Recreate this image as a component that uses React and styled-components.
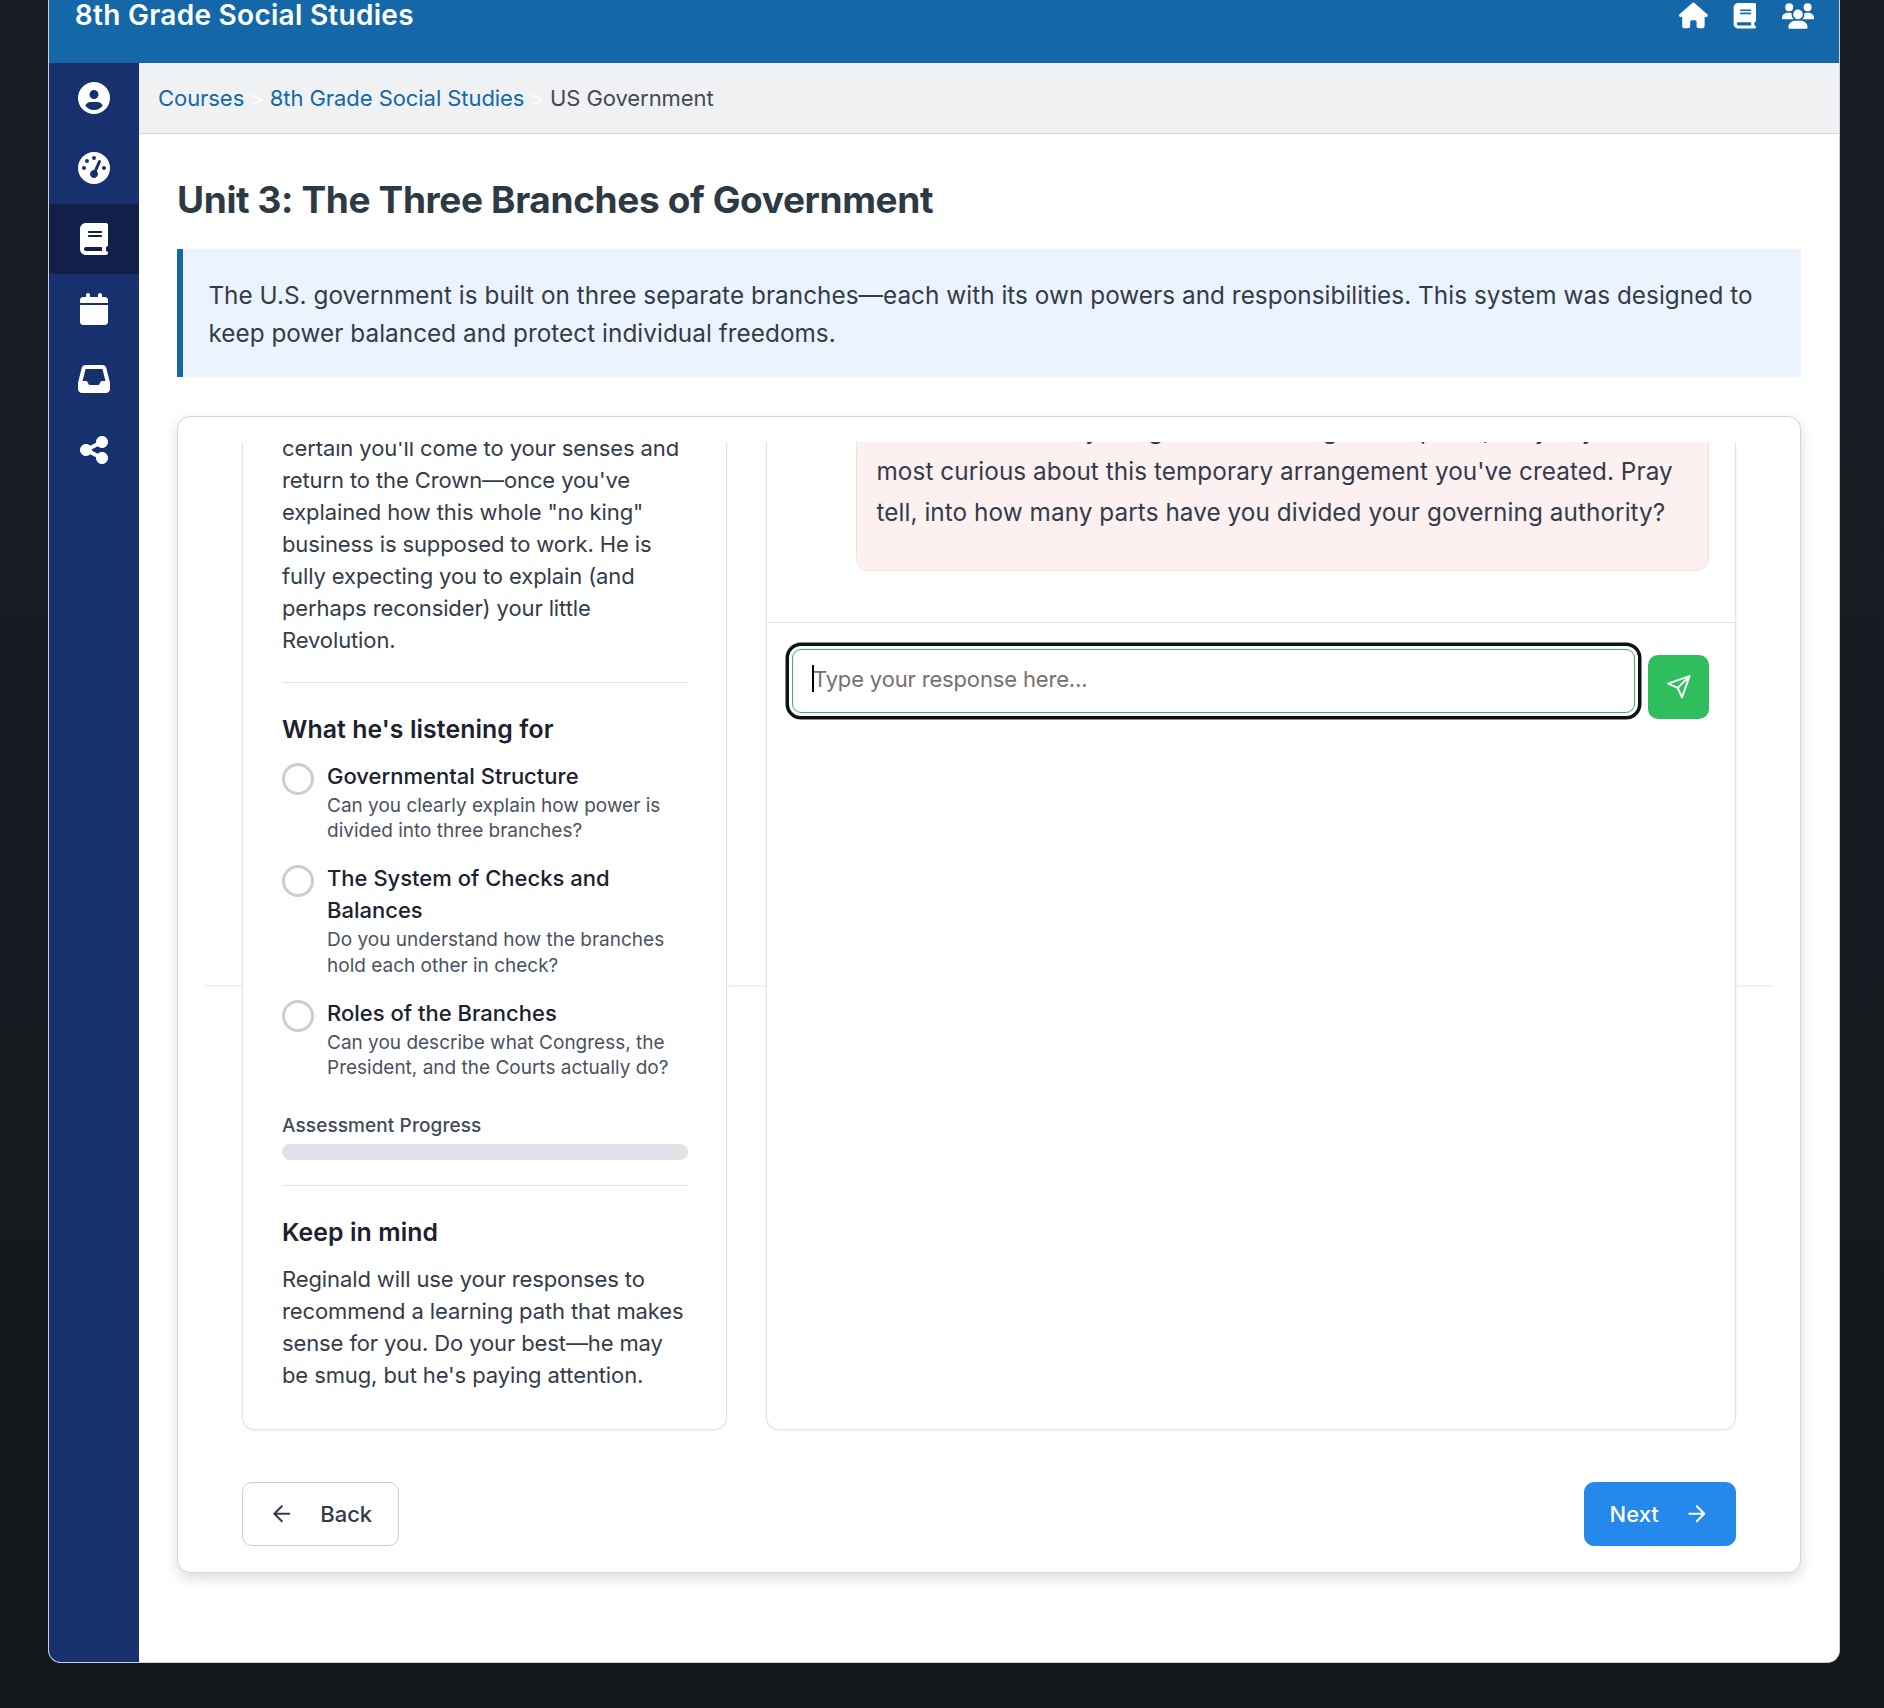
import React from "react";
import styled, { createGlobalStyle, css } from "styled-components";
import {
  FaGaugeHigh,
  FaCalendar,
  FaBook,
  FaInbox,
  FaShareNodes,
  FaHouse,
  FaUsers,
} from "react-icons/fa6";

const GlobalStyle = createGlobalStyle`
  *, *::before, *::after { box-sizing: border-box; }
  body {
    margin: 0;
    background: #15191d;
    font-family: Inter, "Noto Sans", sans-serif;
    color: #343b49;
  }
  p, h1, h2, h3 { margin: 0; }
`;

const Page = styled.div`
  height: 1708px;
  padding-left: 48px;
  overflow: hidden;
  background: linear-gradient(#191c25, #14181b);
`;

const Window = styled.div`
  display: flex;
  flex-direction: column;
  width: 1792px;
  height: 1663px;
  border: 1px solid #cdd1d6;
  border-top: none;
  border-radius: 0 0 13px 13px;
  overflow: hidden;
  background: #fff;
`;

const Header = styled.header`
  display: flex;
  justify-content: space-between;
  flex: none;
  height: 63px;
  padding: 0 25.3px 0 25.8px;
  background: #1468a8;
  color: #fff;
`;

const CourseName = styled.h2`
  font-size: 28px;
  line-height: 30px;
  font-weight: 600;
  letter-spacing: 0.275px;
`;

const HeaderNav = styled.nav`
  display: flex;
  align-items: center;
  gap: 24px;
  height: 31.6px;
`;

const NavGlyph = styled.span`
  display: flex;
  font-size: ${(p) => p.$size}px;
`;

const Body = styled.div`
  display: flex;
  flex: 1;
  min-height: 0;
`;

const Sidebar = styled.aside`
  flex: none;
  width: 90px;
  background: #17316f;
`;

const SidebarItem = styled.a`
  display: flex;
  align-items: center;
  justify-content: center;
  height: 70.3px;
  font-size: 32px;
  color: #fff;
  background: ${(p) => (p.$active ? "#121f48" : "transparent")};
`;

const Content = styled.div`
  flex: 1;
  min-width: 0;
  background: #fff;
`;

const Breadcrumb = styled.nav`
  display: flex;
  align-items: center;
  gap: 5.5px;
  height: 71px;
  padding-left: 19px;
  background: #f0f1f3;
  border-bottom: 1px solid #d6d7da;
  font-size: 22px;
  line-height: 28px;
  letter-spacing: -0.06px;
`;

const Crumb = styled.span`
  color: ${(p) => (p.$link ? "#1468a8" : "#424955")};
`;

const CrumbSeparator = styled.span`
  color: #fcfcfd;
`;

const Main = styled.main`
  padding: 43px 38px 0;
`;

const UnitTitle = styled.h1`
  font-size: 37px;
  line-height: 45px;
  font-weight: 700;
  letter-spacing: -0.37px;
  color: #2d3a44;
`;

const Callout = styled.p`
  height: 128px;
  margin-top: 27px;
  padding: 26.8px 25px 0 25.4px;
  border-left: 6px solid #1468a8;
  background: #ebf3fe;
  font-size: 24.3px;
  line-height: 38.4px;
  letter-spacing: 0.045px;
  white-space: nowrap;
`;

const Card = styled.section`
  height: 1157px;
  margin-top: 39px;
  padding: 25px 26px;
  border: 1px solid #d6d6d9;
  border-radius: 13px;
  background: #fff;
  box-shadow: 0 5px 14px rgba(0, 0, 0, 0.14);
`;

const Scroller = styled.div`
  height: 1104px;
  overflow: hidden;
`;

const Sheet = styled.div`
  height: 543px;
  padding: 0 38px;
  background: #fff;
  box-shadow: 0 1px 3px rgba(0, 0, 0, 0.1);
`;

const Panels = styled.div`
  display: grid;
  grid-template-columns: 485px 970px;
  column-gap: 39px;
  height: 988px;
`;

const panel = css`
  border: 1px solid #e2e3e7;
  border-top: none;
  border-radius: 0 0 13px 13px;
  background: #fff;
  box-shadow: 0 1px 3px rgba(0, 0, 0, 0.06);
`;

const BriefPanel = styled.div`
  ${panel}
  padding: 0 38px 0 39px;
`;

const BriefText = styled.p`
  margin-top: ${(p) => p.$top}px;
  font-size: 22px;
  line-height: 32px;
  letter-spacing: -0.11px;
  white-space: nowrap;
`;

const Divider = styled.hr`
  height: 1px;
  margin: ${(p) => p.$top}px 0 30px;
  border: 0;
  background: #e2e3e7;
`;

const BriefHeading = styled.h3`
  font-size: 24.8px;
  line-height: 32px;
  font-weight: 600;
  letter-spacing: 0.1px;
  color: #1b212d;
`;

const Goals = styled.div`
  display: flex;
  flex-direction: column;
  gap: 18.5px;
  margin-top: 15px;
`;

const Goal = styled.div`
  display: flex;
  gap: 13px;
`;

const GoalMark = styled.span`
  flex: none;
  width: 32px;
  height: 32px;
  margin-top: 3px;
  border: 3px solid #cbcdd5;
  border-radius: 50%;
`;

const GoalTitle = styled.p`
  font-size: 22px;
  line-height: 32px;
  font-weight: 500;
  letter-spacing: 0;
  color: #1b212d;
  white-space: nowrap;
`;

const GoalText = styled.p`
  padding-top: 0.8px;
  font-size: 19px;
  line-height: 25.6px;
  color: #4b5260;
  white-space: nowrap;
`;

const ProgressLabel = styled.p`
  margin-top: 32px;
  font-size: 19px;
  line-height: 26px;
  font-weight: 500;
  letter-spacing: 0.1px;
  color: #434a58;
`;

const ProgressTrack = styled.div`
  height: 16px;
  margin-top: 5px;
  border-radius: 8px;
  background: #e1e1e7;
`;

const ChatPanel = styled.div`
  ${panel}
`;

const Bubble = styled.p`
  margin: -48.7px 26px 51px 89px;
  padding: 16px 19px 37.3px 19.5px;
  border: 1px solid #fadcde;
  border-radius: 13px;
  background: #fcf0f0;
  font-size: 24.3px;
  line-height: 40.8px;
  letter-spacing: 0.07px;
  white-space: nowrap;
`;

const Composer = styled.div`
  display: flex;
  gap: 13px;
  padding: 26px 26px 0 25px;
  border-top: 1px solid #e1e1e7;
`;

const Field = styled.div`
  position: relative;
  flex: 1;
  height: 64px;
`;

const ResponseInput = styled.input`
  display: block;
  width: 100%;
  height: 64px;
  padding: 0 20px 4px;
  border: 1px solid #2fbe5d;
  border-radius: 9px;
  outline: none;
  background: #fff;
  box-shadow: 0 0 0 3px #fff, 0 0 0 6.5px #111;
  font-family: inherit;
  font-size: 22px;
  letter-spacing: -0.16px;
  &::placeholder {
    color: #77716d;
    opacity: 1;
  }
`;

const Caret = styled.span`
  position: absolute;
  left: 20px;
  top: 16px;
  width: 2px;
  height: 27px;
  background: #000;
`;

const SendButton = styled.button`
  display: flex;
  align-items: center;
  justify-content: center;
  width: 61px;
  height: 64px;
  margin-top: 6px;
  padding: 0;
  border: 0;
  border-radius: 10px;
  background: #2fbe5d;
  color: #fff;
`;

const PagerRow = styled.div`
  display: flex;
  justify-content: space-between;
  margin-top: 52px;
`;

const PagerButton = styled.button`
  display: flex;
  align-items: center;
  gap: ${(p) => (p.$primary ? 25 : 26)}px;
  height: 64px;
  padding: 0 25.6px 0 ${(p) => (p.$primary ? 24.8 : 25.6)}px;
  border: 1px solid ${(p) => (p.$primary ? "#2589ec" : "#cbccd6")};
  border-radius: 10px;
  background: ${(p) => (p.$primary ? "#2589ec" : "#fff")};
  color: ${(p) => (p.$primary ? "#fff" : "#343b49")};
  font: 500 22px Inter, "Noto Sans", sans-serif;
`;

const Icon = styled.svg.attrs({
  viewBox: "0 0 24 24",
  fill: "none",
  stroke: "currentColor",
  strokeWidth: 1.9,
  strokeLinecap: "round",
  strokeLinejoin: "round",
})`
  flex: none;
  width: 25.6px;
  height: 25.6px;
`;

const ArrowLeft = () => (
  <Icon>
    <path d="M19 12H5M12 19l-7-7 7-7" />
  </Icon>
);

const ArrowRight = () => (
  <Icon>
    <path d="M5 12h14M12 5l7 7-7 7" />
  </Icon>
);

const Send = () => (
  <Icon>
    <path d="M22 2 11 13M22 2l-7 20-4-9-9-4 20-7z" />
  </Icon>
);

const CircleUser = () => (
  <svg viewBox="0 0 512 512" width="1em" height="1em" fill="currentColor">
    <path
      fillRule="evenodd"
      d="M256 0a256 256 0 1 1 0 512 256 256 0 0 1 0-512zM256 128a72 72 0 1 0 0 144 72 72 0 1 0 0-144zM117 378c34 44 84 70 139 70s105-26 139-70c-18-38-44-58-83-58H200c-39 0-65 20-83 58z"
    />
  </svg>
);

const sidebarItems = [
  { id: "account", Glyph: CircleUser },
  { id: "dashboard", Glyph: FaGaugeHigh },
  { id: "courses", Glyph: FaBook, active: true },
  { id: "calendar", Glyph: FaCalendar },
  { id: "inbox", Glyph: FaInbox },
  { id: "share", Glyph: FaShareNodes },
];

const goals = [
  {
    title: ["Governmental Structure"],
    text: ["Can you clearly explain how power is", "divided into three branches?"],
  },
  {
    title: ["The System of Checks and", "Balances"],
    text: ["Do you understand how the branches", "hold each other in check?"],
  },
  {
    title: ["Roles of the Branches"],
    text: ["Can you describe what Congress, the", "President, and the Courts actually do?"],
  },
];

const Lines = ({ of }) =>
  of.map((line, i) => (
    <React.Fragment key={line}>
      {i > 0 && <br />}
      {line}
    </React.Fragment>
  ));

export default function App() {
  return (
    <Page>
      <GlobalStyle />
      <Window>
        <Header>
          <CourseName>8th Grade Social Studies</CourseName>
          <HeaderNav>
            <NavGlyph $size={28.8}><FaHouse /></NavGlyph>
            <NavGlyph $size={25.6}><FaBook /></NavGlyph>
            <NavGlyph $size={32}><FaUsers /></NavGlyph>
          </HeaderNav>
        </Header>
        <Body>
          <Sidebar>
            {sidebarItems.map(({ id, Glyph, active }) => (
              <SidebarItem key={id} $active={active}>
                <Glyph />
              </SidebarItem>
            ))}
          </Sidebar>
          <Content>
            <Breadcrumb>
              <Crumb $link>Courses</Crumb>
              <CrumbSeparator>&gt;</CrumbSeparator>
              <Crumb $link>8th Grade Social Studies</Crumb>
              <CrumbSeparator>&gt;</CrumbSeparator>
              <Crumb>US Government</Crumb>
            </Breadcrumb>
            <Main>
              <UnitTitle>Unit 3: The Three Branches of Government</UnitTitle>
              <Callout>
                The U.S. government is built on three separate branches—each with its own powers and responsibilities. This system was designed to
                <br />
                keep power balanced and protect individual freedoms.
              </Callout>
              <Card>
                <Scroller>
                  <Sheet>
                    <Panels>
                      <BriefPanel>
                        <BriefText $top={-10}>
                          <Lines
                            of={[
                              "certain you'll come to your senses and",
                              "return to the Crown—once you've",
                              'explained how this whole "no king"',
                              "business is supposed to work. He is",
                              "fully expecting you to explain (and",
                              "perhaps reconsider) your little",
                              "Revolution.",
                            ]}
                          />
                        </BriefText>
                        <Divider $top={26} />
                        <BriefHeading>What he's listening for</BriefHeading>
                        <Goals>
                          {goals.map((goal) => (
                            <Goal key={goal.title[0]}>
                              <GoalMark />
                              <div>
                                <GoalTitle><Lines of={goal.title} /></GoalTitle>
                                <GoalText><Lines of={goal.text} /></GoalText>
                              </div>
                            </Goal>
                          ))}
                        </Goals>
                        <ProgressLabel>Assessment Progress</ProgressLabel>
                        <ProgressTrack />
                        <Divider $top={25} />
                        <BriefHeading>Keep in mind</BriefHeading>
                        <BriefText $top={15}>
                          <Lines
                            of={[
                              "Reginald will use your responses to",
                              "recommend a learning path that makes",
                              "sense for you. Do your best—he may",
                              "be smug, but he's paying attention.",
                            ]}
                          />
                        </BriefText>
                      </BriefPanel>
                      <ChatPanel>
                        <Bubble>
                          <Lines
                            of={[
                              "I do wish to see my old governors ruling in this place; truly say I am",
                              "most curious about this temporary arrangement you've created. Pray",
                              "tell, into how many parts have you divided your governing authority?",
                            ]}
                          />
                        </Bubble>
                        <Composer>
                          <Field>
                            <ResponseInput placeholder="Type your response here..." />
                            <Caret />
                          </Field>
                          <SendButton aria-label="Send"><Send /></SendButton>
                        </Composer>
                      </ChatPanel>
                    </Panels>
                    <PagerRow>
                      <PagerButton><ArrowLeft />Back</PagerButton>
                      <PagerButton $primary>Next<ArrowRight /></PagerButton>
                    </PagerRow>
                  </Sheet>
                </Scroller>
              </Card>
            </Main>
          </Content>
        </Body>
      </Window>
    </Page>
  );
}
